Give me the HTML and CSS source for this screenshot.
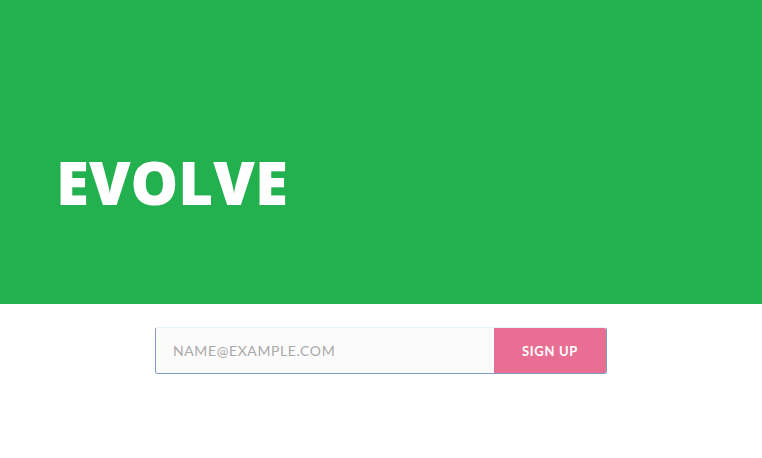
FILE: index.html
```html
<!DOCTYPE html>
<html>
<head>
<meta charset="utf-8">
<link rel="stylesheet" href="styles.css">
</head>
<body>
<header class="hero">
  <h1 class="title">EVOLVE</h1>
</header>
<main class="signup">
  <form class="signup-form">
    <input class="email" type="email" placeholder="NAME@EXAMPLE.COM">
    <button class="btn" type="button">SIGN UP</button>
  </form>
</main>
</body>
</html>
```
FILE: styles.css
```css
html, body {
  margin: 0;
  padding: 0;
  background: #fff;
}
.hero {
  height: 304px;
  background: #23b04e;
  box-sizing: border-box;
  padding: 146px 0 0 56px;
}
.title {
  margin: 0;
  font-family: "Open Sans", sans-serif;
  font-weight: 800;
  font-size: 60px;
  line-height: 72px;
  color: #fff;
  letter-spacing: 0;
}
.signup {
  display: flex;
  justify-content: center;
  padding-top: 23px;
}
.signup-form {
  display: flex;
  width: 452px;
  height: 47px;
  box-sizing: border-box;
  border: 1px solid #7e9cc6;
  border-top-color: #e6f3fb;
  border-radius: 3px;
  overflow: hidden;
}
.email {
  flex: 1;
  border: 0;
  margin: 0;
  padding: 0 0 0 17px;
  background: #fcfbfb;
  font-family: "Lato", sans-serif;
  font-size: 14px;
  letter-spacing: 0.6px;
  color: #555;
  outline: none;
}
.email::placeholder {
  color: #a9a9a9;
}
.btn {
  width: 112px;
  border: 0;
  border-top: 1px solid #7e9cc6;
  margin: -1px 0 0 0;
  background: #e96e93;
  color: #fff;
  font-family: "Lato", sans-serif;
  font-weight: 700;
  font-size: 13px;
  letter-spacing: 0.7px;
  padding: 0;
}
```
